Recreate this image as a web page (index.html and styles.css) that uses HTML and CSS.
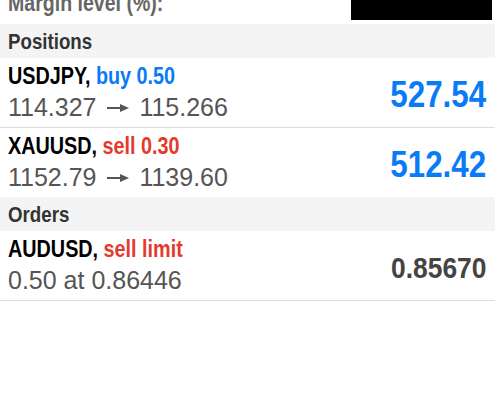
FILE: index.html
```html
<!DOCTYPE html>
<html>
  <head>
    <title>Trade</title>
    <link rel="stylesheet" href="styles.css">
  </head>
  <body>
    <div class="trade">
      <div class="summary-row">
        <span class="summary-label">Margin level (%):</span>
        <span class="redacted"></span>
      </div>

      <div class="section-header"><span class="condensed">Positions</span></div>
      <div class="deal-row">
        <div class="deal-info">
          <div class="deal-title">USDJPY, <span class="buy">buy 0.50</span></div>
          <div class="deal-prices">114.327 <svg class="arrow" width="22" height="10" viewBox="0 0 22 10"><rect x="0" y="4" width="15" height="2" fill="#555"/><polygon points="13,1 22,5 13,9" fill="#555"/></svg> 115.266</div>
        </div>
        <div class="deal-profit">527.54</div>
      </div>
      <div class="deal-row deal-row-last">
        <div class="deal-info">
          <div class="deal-title">XAUUSD, <span class="sell">sell 0.30</span></div>
          <div class="deal-prices">1152.79 <svg class="arrow" width="22" height="10" viewBox="0 0 22 10"><rect x="0" y="4" width="15" height="2" fill="#555"/><polygon points="13,1 22,5 13,9" fill="#555"/></svg> 1139.60</div>
        </div>
        <div class="deal-profit">512.42</div>
      </div>

      <div class="section-header"><span class="condensed">Orders</span></div>
      <div class="deal-row">
        <div class="deal-info">
          <div class="deal-title">AUDUSD, <span class="sell">sell limit</span></div>
          <div class="deal-prices">0.50 at 0.86446</div>
        </div>
        <div class="order-price">0.85670</div>
      </div>
    </div>
  </body>
</html>
```

FILE: styles.css
```css
body {
  margin: 0;
  background: #fff;
  font-family: "Liberation Sans", Arial, sans-serif;
}
.trade {
  width: 495px;
}
.condensed {
  display: inline-block;
  transform: scaleX(0.85);
  transform-origin: left center;
}
.summary-row {
  height: 24px;
  display: flex;
  justify-content: space-between;
  align-items: flex-end;
  padding: 0 3px 0 8px;
  overflow: hidden;
}
.summary-label {
  display: inline-block;
  transform: scaleX(0.85);
  transform-origin: left center;
  font-size: 23px;
  font-weight: bold;
  line-height: 26px;
  color: #666;
  padding-bottom: 8px;
}
.redacted {
  align-self: flex-start;
  width: 141px;
  height: 20px;
  background: #000;
}
.section-header {
  height: 34px;
  box-sizing: border-box;
  padding: 2px 8px 0;
  line-height: 32px;
  background: #f4f4f4;
  color: #333;
  font-size: 22px;
  font-weight: bold;
}
.deal-row {
  display: flex;
  justify-content: space-between;
  align-items: center;
  padding: 4px 9px 3px 8px;
  border-bottom: 1px solid #dcdcdc;
}
.deal-row-last {
  border-bottom: none;
}
.deal-title {
  transform: scaleX(0.86);
  transform-origin: left center;
  white-space: nowrap;
  font-size: 23px;
  font-weight: bold;
  line-height: 28px;
  color: #000;
}
.buy {
  color: #0a7bf6;
}
.sell {
  color: #e43a2d;
}
.deal-prices {
  font-size: 25px;
  line-height: 34px;
  color: #555;
  white-space: nowrap;
}
.arrow {
  vertical-align: 3px;
  margin: 0 3px 0 4px;
}
.deal-profit {
  transform: scaleX(0.87);
  transform-origin: right center;
  font-size: 36px;
  font-weight: bold;
  color: #0a7bf6;
  padding-top: 4px;
}
.order-price {
  transform: scaleX(0.88);
  transform-origin: right center;
  font-size: 30px;
  font-weight: bold;
  color: #444;
  padding-top: 4px;
}
```
